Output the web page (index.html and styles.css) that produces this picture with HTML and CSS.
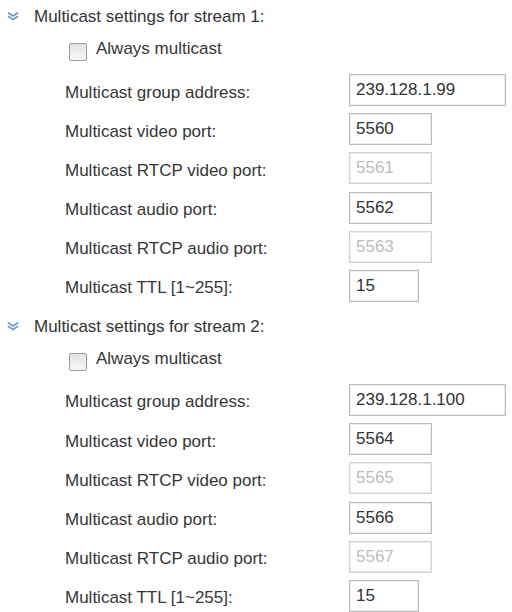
FILE: index.html
```html
<!DOCTYPE html>
<html>
<head>
<meta charset="utf-8">
<link rel="stylesheet" href="styles.css">
</head>
<body>
<div class="section">
  <div class="head">
    <svg class="chev" width="12" height="9" viewBox="0 0 12 9"><path d="M1.5 1 L6 4 L10.5 1 M1.5 4.5 L6 7.5 L10.5 4.5" fill="none" stroke="#6f9ccb" stroke-width="1.7" stroke-linecap="round" stroke-linejoin="round"/></svg>
    <span>Multicast settings for stream 1:</span>
  </div>
  <label class="always"><input type="checkbox" class="cb"><span>Always multicast</span></label>
  <div class="rows">
    <div class="row"><span class="lbl">Multicast group address:</span><input class="field wide" value="239.128.1.99"></div>
    <div class="row"><span class="lbl">Multicast video port:</span><input class="field port" value="5560"></div>
    <div class="row"><span class="lbl">Multicast RTCP video port:</span><input class="field port" value="5561" disabled></div>
    <div class="row"><span class="lbl">Multicast audio port:</span><input class="field port" value="5562"></div>
    <div class="row"><span class="lbl">Multicast RTCP audio port:</span><input class="field port" value="5563" disabled></div>
    <div class="row"><span class="lbl">Multicast TTL [1~255]:</span><input class="field ttl" value="15"></div>
  </div>
</div>
<div class="section">
  <div class="head">
    <svg class="chev" width="12" height="9" viewBox="0 0 12 9"><path d="M1.5 1 L6 4 L10.5 1 M1.5 4.5 L6 7.5 L10.5 4.5" fill="none" stroke="#6f9ccb" stroke-width="1.7" stroke-linecap="round" stroke-linejoin="round"/></svg>
    <span>Multicast settings for stream 2:</span>
  </div>
  <label class="always"><input type="checkbox" class="cb"><span>Always multicast</span></label>
  <div class="rows">
    <div class="row"><span class="lbl">Multicast group address:</span><input class="field wide" value="239.128.1.100"></div>
    <div class="row"><span class="lbl">Multicast video port:</span><input class="field port" value="5564"></div>
    <div class="row"><span class="lbl">Multicast RTCP video port:</span><input class="field port" value="5565" disabled></div>
    <div class="row"><span class="lbl">Multicast audio port:</span><input class="field port" value="5566"></div>
    <div class="row"><span class="lbl">Multicast RTCP audio port:</span><input class="field port" value="5567" disabled></div>
    <div class="row"><span class="lbl">Multicast TTL [1~255]:</span><input class="field ttl" value="15"></div>
  </div>
</div>
</body>
</html>
```
FILE: styles.css
```css
html, body {
  margin: 0;
  padding: 0;
  background: #ffffff;
}
body {
  font-family: "Liberation Sans", Arial, sans-serif;
  font-size: 17px;
  color: #363636;
  width: 512px;
  height: 612px;
  overflow: hidden;
}
.section {
  display: flex;
  flex-direction: column;
  margin-bottom: 8px;
}
.head {
  height: 34px;
  display: flex;
  align-items: center;
  padding-left: 7px;
  color: #343434;
}
.chev {
  margin-right: 15px;
  margin-top: -1px;
}
.always {
  height: 32px;
  display: flex;
  align-items: center;
  padding-left: 69px;
  margin-bottom: 8px;
}
.cb {
  appearance: none;
  -webkit-appearance: none;
  width: 18px;
  height: 18px;
  margin: 0 9px 0 0;
  border: 1px solid #9c9c9c;
  border-radius: 2px;
  background: linear-gradient(#e2e2e2, #f8f8f8);
  box-sizing: border-box;
  position: relative;
  top: 2px;
}
.always span {
  position: relative;
  top: -1px;
}
.rows {
  display: flex;
  flex-direction: column;
  gap: 7.2px;
}
.row {
  height: 32px;
  display: flex;
  align-items: center;
  padding-left: 65px;
}
.lbl {
  width: 284px;
  flex: none;
  padding-top: 5px;
}
.field {
  box-sizing: border-box;
  height: 32px;
  border: 1px solid #bdbdbd;
  box-shadow: inset 0 0 0 1px #ebebeb;
  border-radius: 0;
  padding: 0 0 0 6px;
  margin: 0;
  font-family: "Liberation Sans", Arial, sans-serif;
  font-size: 17px;
  color: #333333;
  background: #ffffff;
  outline: none;
}
.field:disabled {
  color: #bdbdbd;
  border-color: #d2d2d2;
  background: #ffffff;
}
.wide { width: 157px; }
.port { width: 83px; }
.ttl { width: 70px; }
```
